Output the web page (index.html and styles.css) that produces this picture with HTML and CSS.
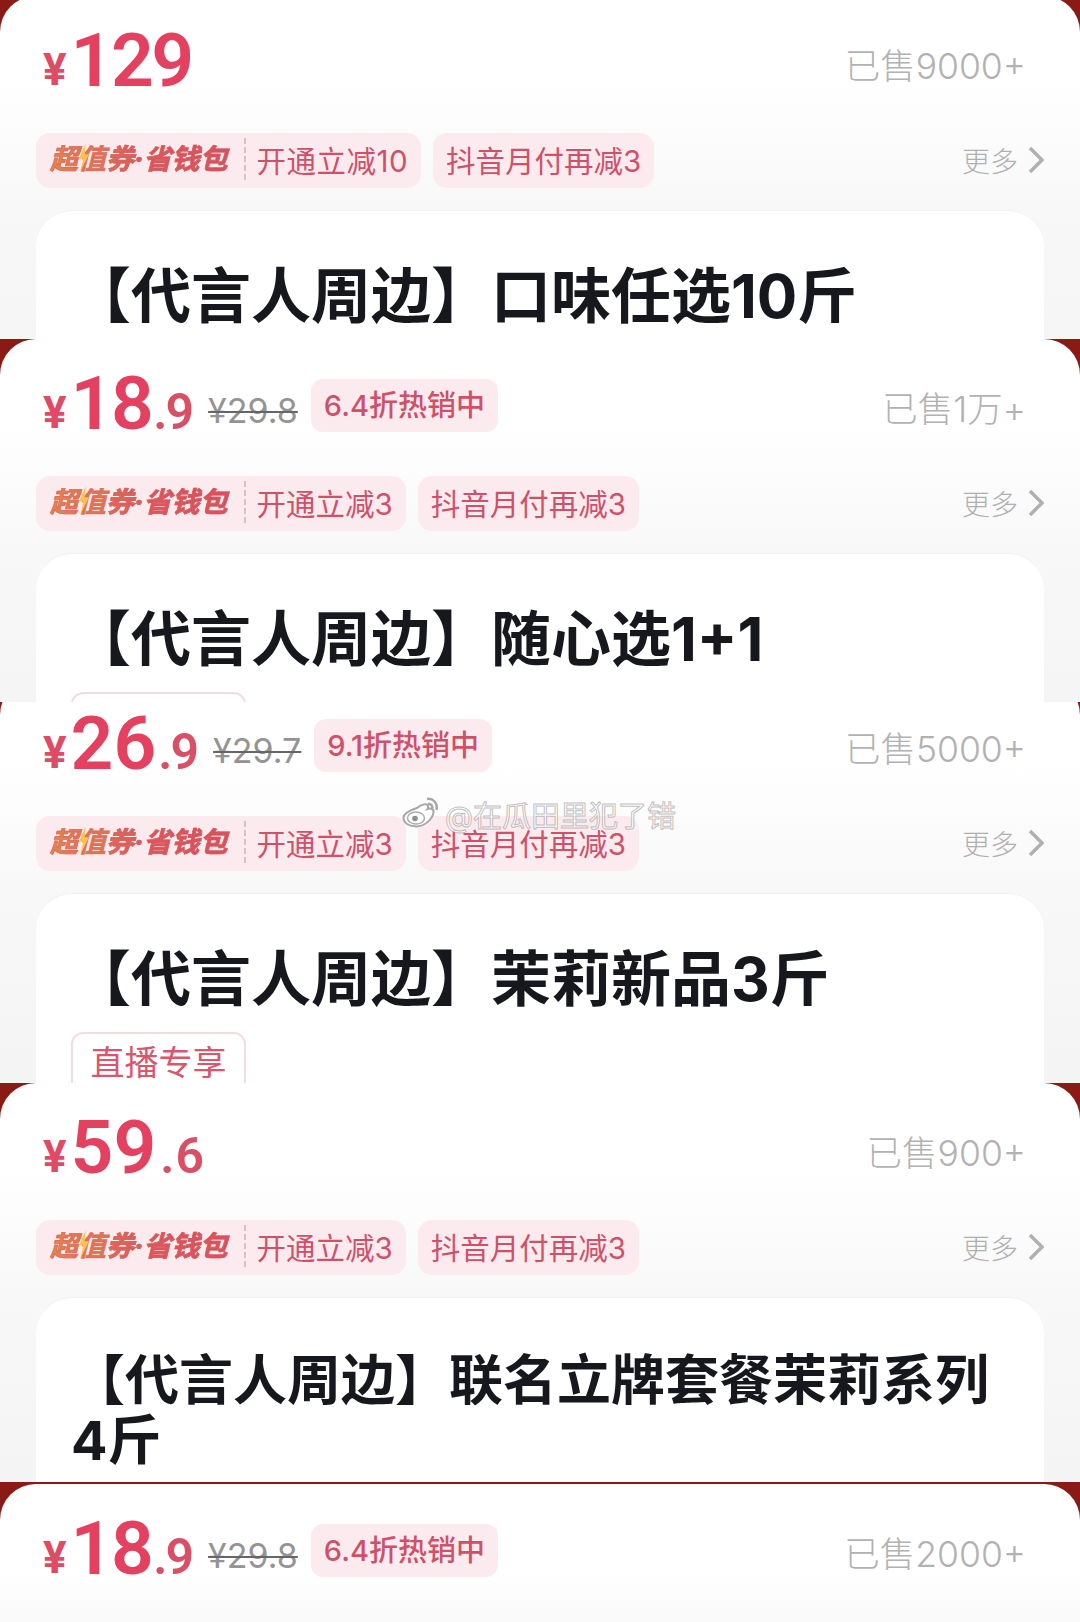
FILE: index.html
```html
<!DOCTYPE html>
<html lang="zh-CN">
<head>
    <meta charset="UTF-8">
    <meta name="viewport" content="width=device-width, initial-scale=1.0">
    <title>代言人周边</title>
    <link rel="stylesheet" href="styles.css">
</head>
<body>
    <section class="slice slice-one">
        <div class="card">
            <div class="price-row">
                <div class="price"><span class="yen">¥</span><span class="big">129</span></div>
                <span class="sold">已售9000+</span>
            </div>
            <div class="coupon-row">
                <div class="pill"><span class="brand">超<span class="bolt-char">值<svg class="bolt" viewBox="0 0 10 26"><path d="M7 0 1 14h4L2 26l8-16H6z"/></svg></span>券·省钱包</span><span class="pill-text">开通立减10</span></div>
                <div class="pill">抖音月付再减3</div>
                <div class="more">更多<svg class="chevron" viewBox="0 0 16 28"><path d="M2 2l12 12L2 26"/></svg></div>
            </div>
            <div class="inner">
                <h2 class="title">【代言人周边】口味任选10斤</h2>
            </div>
        </div>
    </section>

    <section class="slice slice-two">
        <div class="card">
            <div class="price-row">
                <div class="price"><span class="yen">¥</span><span class="big">18</span><span class="small">.9</span></div>
                <span class="old">¥29.8</span>
                <span class="hot">6.4折热销中</span>
                <span class="sold">已售1万+</span>
            </div>
            <div class="coupon-row">
                <div class="pill"><span class="brand">超<span class="bolt-char">值<svg class="bolt" viewBox="0 0 10 26"><path d="M7 0 1 14h4L2 26l8-16H6z"/></svg></span>券·省钱包</span><span class="pill-text">开通立减3</span></div>
                <div class="pill">抖音月付再减3</div>
                <div class="more">更多<svg class="chevron" viewBox="0 0 16 28"><path d="M2 2l12 12L2 26"/></svg></div>
            </div>
            <div class="inner">
                <h2 class="title">【代言人周边】随心选1+1</h2>
                <span class="live-tag">直播专享</span>
            </div>
        </div>
    </section>

    <section class="slice slice-three">
        <div class="card">
            <div class="price-row">
                <div class="price"><span class="yen">¥</span><span class="big big-wide">26</span><span class="small">.9</span></div>
                <span class="old">¥29.7</span>
                <span class="hot">9.1折热销中</span>
                <span class="sold">已售5000+</span>
            </div>
            <div class="coupon-row">
                <div class="pill"><span class="brand">超<span class="bolt-char">值<svg class="bolt" viewBox="0 0 10 26"><path d="M7 0 1 14h4L2 26l8-16H6z"/></svg></span>券·省钱包</span><span class="pill-text">开通立减3</span></div>
                <div class="pill">抖音月付再减3</div>
                <div class="more">更多<svg class="chevron" viewBox="0 0 16 28"><path d="M2 2l12 12L2 26"/></svg></div>
            </div>
            <div class="inner">
                <h2 class="title">【代言人周边】茉莉新品3斤</h2>
                <span class="live-tag">直播专享</span>
            </div>
        </div>
    </section>

    <section class="slice slice-four">
        <div class="card">
            <div class="price-row">
                <div class="price"><span class="yen">¥</span><span class="big big-wide">59</span><span class="small small-wide">.6</span></div>
                <span class="sold">已售900+</span>
            </div>
            <div class="coupon-row">
                <div class="pill"><span class="brand">超<span class="bolt-char">值<svg class="bolt" viewBox="0 0 10 26"><path d="M7 0 1 14h4L2 26l8-16H6z"/></svg></span>券·省钱包</span><span class="pill-text">开通立减3</span></div>
                <div class="pill">抖音月付再减3</div>
                <div class="more">更多<svg class="chevron" viewBox="0 0 16 28"><path d="M2 2l12 12L2 26"/></svg></div>
            </div>
            <div class="inner">
                <h2 class="title title-long">【代言人周边】联名立牌套餐茉莉系列<br>4斤</h2>
            </div>
        </div>
    </section>

    <section class="slice slice-five">
        <div class="card">
            <div class="price-row">
                <div class="price"><span class="yen">¥</span><span class="big">18</span><span class="small">.9</span></div>
                <span class="old">¥29.8</span>
                <span class="hot">6.4折热销中</span>
                <span class="sold">已售2000+</span>
            </div>
        </div>
    </section>

    <div class="watermark">
        <svg class="weibo" viewBox="0 0 40 36">
            <path class="weibo-body" d="M16 12c5-4 10-5 11-2 .5 1.500-.5 3-.5 3 2-.7 6-.8 6 2.500 0 7-9 15-17 15-7 0-13-3-13-9 0-3 5-7 13.500-9.500z"/>
            <ellipse class="weibo-inner" cx="15" cy="22" rx="8.500" ry="6"/>
            <circle class="weibo-eye" cx="14" cy="22.500" r="2.800"/>
            <path class="weibo-arc" d="M26 3c6-1 11 4 9.500 11M27 8c3-.5 5 1.500 4 5"/>
        </svg>
        <span>@在瓜田里犯了错</span>
    </div>
</body>
</html>
```

FILE: styles.css
```css
body {
    margin: 0;
    position: relative;
    font-family: Inter, "Noto Sans CJK SC", sans-serif;
    background-color: #8a1a14;
}

.slice {
    overflow: hidden;
    background-color: #8a1a14;
}

.slice-one { height: 339px; }
.slice-two { height: 363px; }
.slice-three { height: 381px; }
.slice-four { height: 401px; box-sizing: border-box; border-bottom: 2px solid #8a1a14; }
.slice-five { height: 138px; }

.slice-one .card { margin-top: -4px; }
.slice-one .pill-text { letter-spacing: 0.500px; }
.slice-three .card { margin-top: -23px; }

.card {
    height: 520px;
    padding: 0 36px;
    border-radius: 36px 36px 0 0;
    background: linear-gradient(#fff 0, #fff 80px, #f8f8f9 210px, #f4f4f5 400px);
}

.slice-five .card {
    background: linear-gradient(#fff 0, #fff 90px, #f9f9fa 138px);
}

.price-row {
    height: 137px;
    display: flex;
    align-items: center;
    padding: 0 18px 0 7px;
    box-sizing: border-box;
}

.price {
    display: flex;
    align-items: baseline;
    margin-top: -8px;
    color: #e4405f;
    font-family: Roboto, sans-serif;
    font-weight: 600;
    line-height: 1;
}

.yen {
    font-size: 44px;
    font-weight: 700;
    margin-right: 4px;
    position: relative;
    top: -1px;
    color: #df4b65;
}

.big {
    font-size: 75px;
    letter-spacing: -2.500px;
}

.big-wide {
    letter-spacing: 0;
}

.small {
    font-size: 50px;
    letter-spacing: -2px;
    color: #d94f66;
    margin-left: 2px;
}

.small-wide {
    letter-spacing: 1px;
    margin-left: 4px;
}

.old {
    margin-left: 16px;
    margin-top: 6px;
    font-size: 34px;
    color: #949494;
    text-decoration: line-through;
    text-decoration-color: #666;
    text-decoration-thickness: 2px;
}

.hot {
    margin-left: 13px;
    margin-top: -4px;
    padding: 0 13px;
    height: 53px;
    line-height: 53px;
    border-radius: 12px;
    background-color: #fbebee;
    color: #cf5068;
    font-size: 29px;
    font-weight: 500;
}

.sold {
    margin-left: auto;
    margin-top: -3px;
    font-size: 35.500px;
    font-weight: 300;
    color: #b2b2b2;
}

.coupon-row {
    display: flex;
    align-items: center;
    gap: 12px;
    height: 55px;
    margin-bottom: 22px;
}

.pill {
    display: flex;
    align-items: center;
    box-sizing: border-box;
    height: 55px;
    padding: 0 13px 3px;
    border-radius: 14px;
    background-color: #fbebee;
    color: #d0506a;
    font-size: 29.500px;
}

.brand {
    display: inline-block;
    margin-left: 1px;
    padding-right: 17px;
    border-right: 2px dashed #d8c0c5;
    line-height: 42px;
    font-size: 28px;
    font-weight: 700;
    font-style: italic;
    white-space: nowrap;
    color: transparent;
    background: linear-gradient(90deg, #e2854e 0, #d9585c 50%, #d6505f 100%);
    -webkit-background-clip: text;
    background-clip: text;
    -webkit-text-stroke: 0.700px rgba(217, 88, 92, 0.7);
}

.bolt-char {
    position: relative;
    color: #df7550;
}

.bolt {
    position: absolute;
    left: 0;
    top: 1px;
    width: 11px;
    height: 29px;
    fill: #ffc24a;
    stroke: none;
}

.pill-text {
    margin-left: 10px;
}

.more {
    display: flex;
    align-items: center;
    margin-left: auto;
    padding-bottom: 2px;
    font-size: 28px;
    font-weight: 300;
    color: #b0b0b0;
}

.chevron {
    width: 16px;
    height: 28px;
    margin-left: 10px;
    fill: none;
    stroke: #b0b0b0;
    stroke-width: 3.500;
}

.inner {
    height: 400px;
    padding: 53px 35px 0 35px;
    border-top: 1px solid #f1f1f2;
    border-radius: 36px 36px 0 0;
    background-color: #fff;
}

.title {
    margin: 0;
    font-size: 60px;
    line-height: 64px;
    font-weight: 700;
    color: #16181d;
    white-space: nowrap;
}

.title-long {
    font-size: 54px;
    line-height: 60px;
}

.live-tag {
    display: inline-block;
    box-sizing: border-box;
    width: 175px;
    height: 64px;
    margin-top: 21px;
    border: 2px solid #f0dde0;
    border-radius: 12px;
    line-height: 58px;
    text-align: center;
    font-size: 34px;
    color: #d9566c;
}

.watermark {
    position: absolute;
    left: 401px;
    top: 793px;
    display: flex;
    align-items: center;
    gap: 4px;
    font-size: 29px;
    color: rgba(255, 255, 255, 0.85);
    -webkit-text-stroke: 1px rgba(130, 130, 130, 0.5);
    white-space: nowrap;
}

.weibo {
    width: 40px;
    height: 36px;
}

.weibo-body {
    fill: rgba(255, 255, 255, 0.9);
    stroke: #a8a8a8;
    stroke-width: 2;
}

.weibo-inner {
    fill: rgba(255, 255, 255, 0.9);
    stroke: #aaa;
    stroke-width: 1.500;
}

.weibo-eye {
    fill: #8f8f8f;
}

.weibo-arc {
    fill: none;
    stroke: #a8a8a8;
    stroke-width: 2.500;
}
```
